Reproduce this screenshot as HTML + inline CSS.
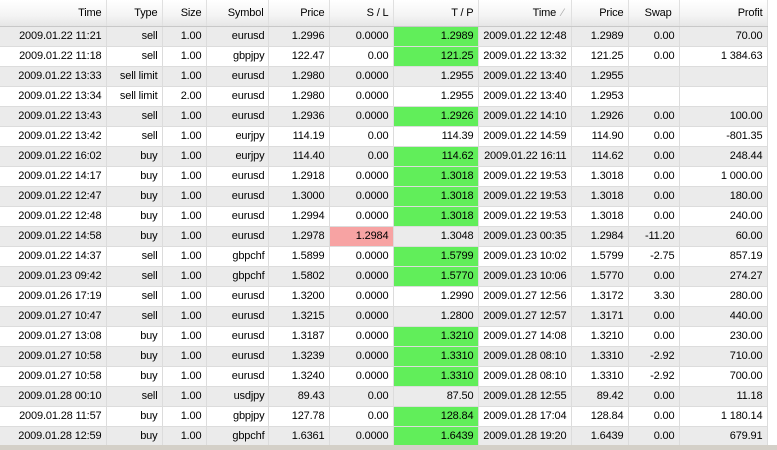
<!DOCTYPE html><html><head><style>
body{margin:0;width:777px;height:450px;overflow:hidden;background:#fff;font-family:Tahoma,"Liberation Sans",sans-serif;font-size:11px;color:#000}
.bot{position:absolute;left:0;top:445px;width:777px;height:5px;background:#d4d0c8}
table{position:absolute;left:0;top:0;border-collapse:collapse;table-layout:fixed}
td,th{padding:0 4px 0 0;text-align:right;white-space:nowrap;overflow:hidden;border-right:1px solid #dcdcdc;border-bottom:1px solid #dcdcdc;height:19px;line-height:19px;letter-spacing:-0.15px}
th{font-weight:normal;height:24px;line-height:26px;background:linear-gradient(#fff,#f4f4f4 60%,#e6e6e6);border-right:1px solid #e0e0e0;border-bottom:1px solid #c8c8c8}
tr.g td{background:#ebebeb}
td.gr{background:#61ee5a!important}
td.pk{background:#f7a3a3!important}
td.c{text-align:right;padding-right:3px}
th.c{text-align:right;padding-right:4px}
</style></head><body>
<table>
<colgroup><col style="width:106px"><col style="width:56px"><col style="width:44px"><col style="width:62px"><col style="width:61px"><col style="width:64px"><col style="width:85px"><col style="width:93px"><col style="width:57px"><col style="width:51px"><col style="width:88px"><col style="width:10px"></colgroup>
<tr><th>Time</th><th>Type</th><th>Size</th><th class="c">Symbol</th><th>Price</th><th>S / L</th><th>T / P</th><th>Time &nbsp;<span style="color:#aaa">⁄</span>&nbsp;</th><th>Price</th><th>Swap&nbsp;</th><th>Profit</th><th style="border:none;background:#fff"></th></tr>
<tr class="g"><td>2009.01.22 11:21</td><td>sell</td><td>1.00</td><td class="c">eurusd</td><td>1.2996</td><td>0.0000</td><td class="gr">1.2989</td><td>2009.01.22 12:48</td><td>1.2989</td><td>0.00</td><td>70.00</td><td style="border:none;background:#fff"></td></tr>
<tr><td>2009.01.22 11:18</td><td>sell</td><td>1.00</td><td class="c">gbpjpy</td><td>122.47</td><td>0.00</td><td class="gr">121.25</td><td>2009.01.22 13:32</td><td>121.25</td><td>0.00</td><td>1 384.63</td><td style="border:none"></td></tr>
<tr class="g"><td>2009.01.22 13:33</td><td>sell limit</td><td>1.00</td><td class="c">eurusd</td><td>1.2980</td><td>0.0000</td><td>1.2955</td><td>2009.01.22 13:40</td><td>1.2955</td><td></td><td></td><td style="border:none;background:#fff"></td></tr>
<tr><td>2009.01.22 13:34</td><td>sell limit</td><td>2.00</td><td class="c">eurusd</td><td>1.2980</td><td>0.0000</td><td>1.2955</td><td>2009.01.22 13:40</td><td>1.2953</td><td></td><td></td><td style="border:none"></td></tr>
<tr class="g"><td>2009.01.22 13:43</td><td>sell</td><td>1.00</td><td class="c">eurusd</td><td>1.2936</td><td>0.0000</td><td class="gr">1.2926</td><td>2009.01.22 14:10</td><td>1.2926</td><td>0.00</td><td>100.00</td><td style="border:none;background:#fff"></td></tr>
<tr><td>2009.01.22 13:42</td><td>sell</td><td>1.00</td><td class="c">eurjpy</td><td>114.19</td><td>0.00</td><td>114.39</td><td>2009.01.22 14:59</td><td>114.90</td><td>0.00</td><td>-801.35</td><td style="border:none"></td></tr>
<tr class="g"><td>2009.01.22 16:02</td><td>buy</td><td>1.00</td><td class="c">eurjpy</td><td>114.40</td><td>0.00</td><td class="gr">114.62</td><td>2009.01.22 16:11</td><td>114.62</td><td>0.00</td><td>248.44</td><td style="border:none;background:#fff"></td></tr>
<tr><td>2009.01.22 14:17</td><td>buy</td><td>1.00</td><td class="c">eurusd</td><td>1.2918</td><td>0.0000</td><td class="gr">1.3018</td><td>2009.01.22 19:53</td><td>1.3018</td><td>0.00</td><td>1 000.00</td><td style="border:none"></td></tr>
<tr class="g"><td>2009.01.22 12:47</td><td>buy</td><td>1.00</td><td class="c">eurusd</td><td>1.3000</td><td>0.0000</td><td class="gr">1.3018</td><td>2009.01.22 19:53</td><td>1.3018</td><td>0.00</td><td>180.00</td><td style="border:none;background:#fff"></td></tr>
<tr><td>2009.01.22 12:48</td><td>buy</td><td>1.00</td><td class="c">eurusd</td><td>1.2994</td><td>0.0000</td><td class="gr">1.3018</td><td>2009.01.22 19:53</td><td>1.3018</td><td>0.00</td><td>240.00</td><td style="border:none"></td></tr>
<tr class="g"><td>2009.01.22 14:58</td><td>buy</td><td>1.00</td><td class="c">eurusd</td><td>1.2978</td><td class="pk">1.2984</td><td>1.3048</td><td>2009.01.23 00:35</td><td>1.2984</td><td>-11.20</td><td>60.00</td><td style="border:none;background:#fff"></td></tr>
<tr><td>2009.01.22 14:37</td><td>sell</td><td>1.00</td><td class="c">gbpchf</td><td>1.5899</td><td>0.0000</td><td class="gr">1.5799</td><td>2009.01.23 10:02</td><td>1.5799</td><td>-2.75</td><td>857.19</td><td style="border:none"></td></tr>
<tr class="g"><td>2009.01.23 09:42</td><td>sell</td><td>1.00</td><td class="c">gbpchf</td><td>1.5802</td><td>0.0000</td><td class="gr">1.5770</td><td>2009.01.23 10:06</td><td>1.5770</td><td>0.00</td><td>274.27</td><td style="border:none;background:#fff"></td></tr>
<tr><td>2009.01.26 17:19</td><td>sell</td><td>1.00</td><td class="c">eurusd</td><td>1.3200</td><td>0.0000</td><td>1.2990</td><td>2009.01.27 12:56</td><td>1.3172</td><td>3.30</td><td>280.00</td><td style="border:none"></td></tr>
<tr class="g"><td>2009.01.27 10:47</td><td>sell</td><td>1.00</td><td class="c">eurusd</td><td>1.3215</td><td>0.0000</td><td>1.2800</td><td>2009.01.27 12:57</td><td>1.3171</td><td>0.00</td><td>440.00</td><td style="border:none;background:#fff"></td></tr>
<tr><td>2009.01.27 13:08</td><td>buy</td><td>1.00</td><td class="c">eurusd</td><td>1.3187</td><td>0.0000</td><td class="gr">1.3210</td><td>2009.01.27 14:08</td><td>1.3210</td><td>0.00</td><td>230.00</td><td style="border:none"></td></tr>
<tr class="g"><td>2009.01.27 10:58</td><td>buy</td><td>1.00</td><td class="c">eurusd</td><td>1.3239</td><td>0.0000</td><td class="gr">1.3310</td><td>2009.01.28 08:10</td><td>1.3310</td><td>-2.92</td><td>710.00</td><td style="border:none;background:#fff"></td></tr>
<tr><td>2009.01.27 10:58</td><td>buy</td><td>1.00</td><td class="c">eurusd</td><td>1.3240</td><td>0.0000</td><td class="gr">1.3310</td><td>2009.01.28 08:10</td><td>1.3310</td><td>-2.92</td><td>700.00</td><td style="border:none"></td></tr>
<tr class="g"><td>2009.01.28 00:10</td><td>sell</td><td>1.00</td><td class="c">usdjpy</td><td>89.43</td><td>0.00</td><td>87.50</td><td>2009.01.28 12:55</td><td>89.42</td><td>0.00</td><td>11.18</td><td style="border:none;background:#fff"></td></tr>
<tr><td>2009.01.28 11:57</td><td>buy</td><td>1.00</td><td class="c">gbpjpy</td><td>127.78</td><td>0.00</td><td class="gr">128.84</td><td>2009.01.28 17:04</td><td>128.84</td><td>0.00</td><td>1 180.14</td><td style="border:none"></td></tr>
<tr class="g"><td>2009.01.28 12:59</td><td>buy</td><td>1.00</td><td class="c">gbpchf</td><td>1.6361</td><td>0.0000</td><td class="gr">1.6439</td><td>2009.01.28 19:20</td><td>1.6439</td><td>0.00</td><td>679.91</td><td style="border:none;background:#fff"></td></tr>
</table>
<div class="bot"></div>
</body></html>
